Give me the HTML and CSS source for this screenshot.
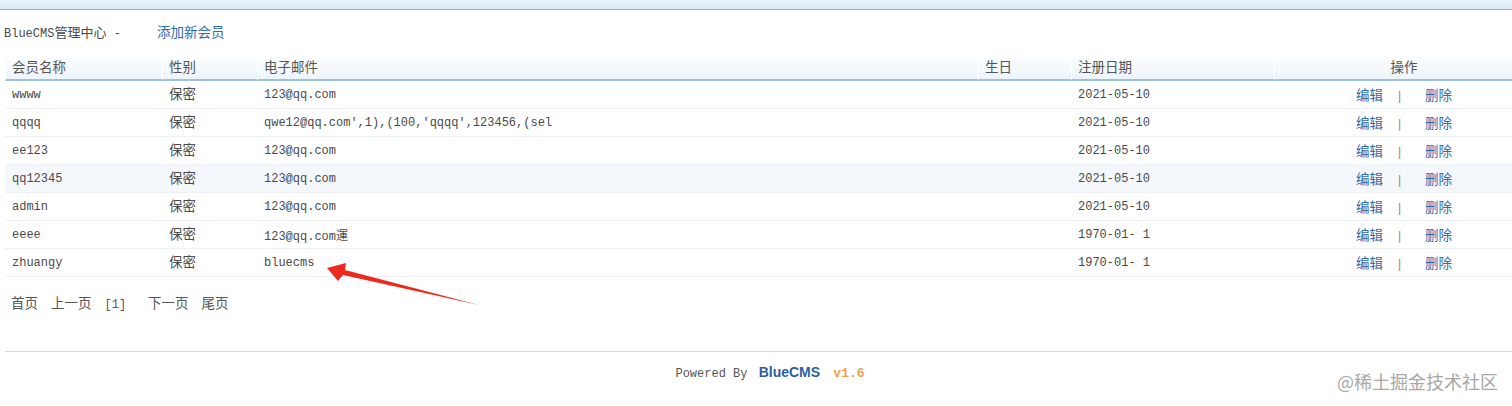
FILE: index.html
```html
<!DOCTYPE html>
<html lang="zh-CN">
<head>
    <meta charset="UTF-8">
    <title>会员列表 - BlueCMS管理中心</title>
    <link rel="stylesheet" href="styles.css">
</head>
<body>
<div class="page">
    <div class="topbar"></div>

    <div class="main">
        <div class="crumb">BlueCMS<span class="cn">管理中心</span> - <a href="#" class="add">添加新会员</a></div>

        <table class="list">
            <colgroup>
                <col style="width:157px">
                <col style="width:95px">
                <col style="width:721px">
                <col style="width:93px">
                <col style="width:203px">
                <col>
            </colgroup>
            <tr>
                <th>会员名称</th>
                <th>性别</th>
                <th>电子邮件</th>
                <th>生日</th>
                <th>注册日期</th>
                <th class="ops">操作</th>
            </tr>
            <tr>
                <td>wwww</td><td class="cn">保密</td><td>123@qq.com</td><td></td><td>2021-05-10</td>
                <td class="ops"><a href="#">编辑</a><span class="sep">|</span><a href="#">删除</a></td>
            </tr>
            <tr>
                <td>qqqq</td><td class="cn">保密</td><td>qwe12@qq.com',1),(100,'qqqq',123456,(sel</td><td></td><td>2021-05-10</td>
                <td class="ops"><a href="#">编辑</a><span class="sep">|</span><a href="#">删除</a></td>
            </tr>
            <tr>
                <td>ee123</td><td class="cn">保密</td><td>123@qq.com</td><td></td><td>2021-05-10</td>
                <td class="ops"><a href="#">编辑</a><span class="sep">|</span><a href="#">删除</a></td>
            </tr>
            <tr class="hover">
                <td>qq12345</td><td class="cn">保密</td><td>123@qq.com</td><td></td><td>2021-05-10</td>
                <td class="ops"><a href="#">编辑</a><span class="sep">|</span><a href="#">删除</a></td>
            </tr>
            <tr>
                <td>admin</td><td class="cn">保密</td><td>123@qq.com</td><td></td><td>2021-05-10</td>
                <td class="ops"><a href="#">编辑</a><span class="sep">|</span><a href="#">删除</a></td>
            </tr>
            <tr>
                <td>eeee</td><td class="cn">保密</td><td>123@qq.com運</td><td></td><td>1970-01-&nbsp;1</td>
                <td class="ops"><a href="#">编辑</a><span class="sep">|</span><a href="#">删除</a></td>
            </tr>
            <tr>
                <td>zhuangy</td><td class="cn">保密</td><td>bluecms</td><td></td><td>1970-01-&nbsp;1</td>
                <td class="ops"><a href="#">编辑</a><span class="sep">|</span><a href="#">删除</a></td>
            </tr>
        </table>

        <div class="pager">
            <span>首页</span>
            <span>上一页</span>
            <span class="cur">[1]</span>
            <span>下一页</span>
            <span>尾页</span>
        </div>
    </div>

    <div class="footer">
        Powered By <span class="brand">BlueCMS</span> <span class="ver">v1.6</span>
    </div>
</div>

<!-- annotation layer -->
<svg class="arrow" width="1512" height="406" viewBox="0 0 1512 406">
    <polygon points="327,268 346,263 345,270 479,305 343,275 338,281" fill="#ec2a1f"/>
</svg>
<div class="watermark">@稀土掘金技术社区</div>
</body>
</html>
```

FILE: styles.css
```css
body {
    margin: 0;
    font-family: "Liberation Mono", "Noto Sans CJK SC", monospace;
    font-size: 12px;
    color: #4a4a4a;
    background-color: #fff;
    position: relative;
    height: 406px;
    overflow: hidden;
}
.page {
    width: 1535px;
}
a {
    color: #2c6aab;
    text-decoration: none;
}
.cn {
    font-family: "Noto Sans CJK SC", sans-serif;
    font-size: 13px;
}
.topbar {
    height: 9px;
    background: linear-gradient(#e9f3fb, #dcebf8);
    border-bottom: 1px solid #86b3d7;
}
.main {
    padding: 0 2px 0 5px;
}
.crumb {
    height: 43px;
    line-height: 42px;
    margin-left: -1px;
    font-size: 12px;
}
.crumb .add {
    font-family: "Noto Sans CJK SC", sans-serif;
    font-size: 13.5px;
    margin-left: 29px;
}
.list {
    width: 100%;
    border-collapse: separate;
    border-spacing: 0;
    table-layout: fixed;
}
.list th {
    height: 26px;
    padding: 0 6px;
    text-align: left;
    font-family: "Noto Sans CJK SC", sans-serif;
    font-size: 13.5px;
    font-weight: normal;
    color: #555;
    background: linear-gradient(#ffffff, #edf5fb);
    border-left: 1px solid #fff;
    border-bottom: 2px solid #9cc2e0;
}
.list td {
    height: 27px;
    padding: 0 6px 0 7px;
    border-bottom: 1px solid #eef2f6;
    white-space: nowrap;
    overflow: hidden;
}
.list td.cn {
    font-size: 13.5px;
    padding-bottom: 3px;
    height: 24px;
}
.list tr.hover td {
    background-color: #f4f8fc;
}
.list th.ops,
.list td.ops {
    text-align: center;
}
.list td.ops {
    padding-bottom: 2px;
    height: 25px;
}
.list td.ops a {
    font-family: "Noto Sans CJK SC", sans-serif;
    font-size: 13.5px;
}
.list .sep {
    color: #888;
    margin: 0 22px 0 13px;
}
.pager {
    height: 50px;
    line-height: 50px;
    padding-left: 6px;
    font-family: "Noto Sans CJK SC", sans-serif;
    font-size: 13.5px;
    color: #555;
    display: flex;
    align-items: baseline;
    gap: 13px;
}
.pager .cur {
    font-family: "Liberation Mono", monospace;
    font-size: 12px;
    margin-right: 9px;
}
.footer {
    margin: 24px 0 0 5px;
    border-top: 1px solid #c6ddef;
    padding-top: 12px;
    text-align: center;
    font-size: 12px;
    color: #555;
}
.footer .brand {
    font-family: "Liberation Sans", sans-serif;
    font-weight: bold;
    font-size: 14px;
    color: #2b5f9e;
    margin: 0 6px 0 4px;
}
.footer .ver {
    font-weight: bold;
    font-size: 13px;
    color: #f0a04a;
}
.arrow {
    position: absolute;
    left: 0;
    top: 0;
    pointer-events: none;
}
.watermark {
    position: absolute;
    right: 14px;
    bottom: 12px;
    font-family: "Noto Sans CJK SC", sans-serif;
    font-size: 18px;
    color: #a8a8a8;
    text-shadow: 0 0 2px #fff;
}
```
